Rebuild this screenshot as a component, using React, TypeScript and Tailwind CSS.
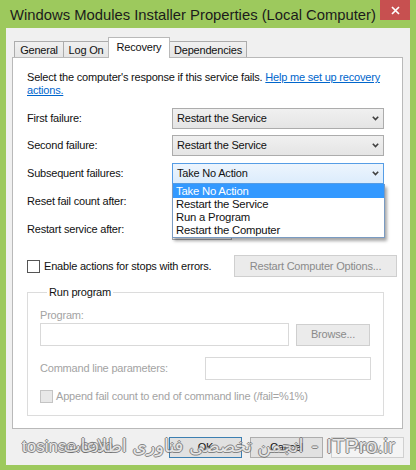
import React from "react";

const FONT = "font-['Liberation_Sans',Arial,sans-serif]";

function Chevron() {
  return (
    <svg width="7" height="5" viewBox="0 0 7 5" className="shrink-0">
      <polyline points="0.8,0.8 3.5,3.6 6.2,0.8" fill="none" stroke="#404040" strokeWidth="1.6" />
    </svg>
  );
}

function Combo({ text, focused }: { text: string; focused?: boolean }) {
  return (
    <div
      className={`w-[212px] h-[21px] flex items-center justify-between pl-[4px] pr-[4px] border ${
        focused
          ? "border-[#569de5] bg-linear-to-b from-[#edf5fd] to-[#dcecfc]"
          : "border-[#acacac] bg-linear-to-b from-[#f0f0f0] to-[#e5e5e5]"
      }`}
    >
      <span className="text-[#111]">{text}</span>
      <Chevron />
    </div>
  );
}

function Label({ children }: { children: React.ReactNode }) {
  return <div className="w-[145px] shrink-0 text-[#111]">{children}</div>;
}

function Tab({ label, w, selected }: { label: string; w: string; selected?: boolean }) {
  return selected ? (
    <div
      className={`${w} h-[21px] -ml-px relative z-10 bg-white border border-b-0 border-[#b9b9b9] flex justify-center pt-[3px] text-[#111]`}
    >
      {label}
    </div>
  ) : (
    <div
      className={`${w} h-[17px] mt-[4px] -ml-px bg-linear-to-b from-[#f0f0f0] to-[#e5e5e5] border border-b-0 border-[#acacac] flex justify-center pt-[2px] text-[#111]`}
    >
      {label}
    </div>
  );
}

export default function App() {
  return (
    <div
      className={`${FONT} relative w-[416px] h-[470px] bg-[#9dc95d] flex flex-col overflow-hidden text-[11px] tracking-[-0.2px] leading-[13px]`}
    >
      {/* Title bar */}
      <div className="h-[28px] flex items-start shrink-0">
        <div className="pl-[10px] pt-[6px] text-[14.8px] leading-[18px] tracking-normal text-[#1b1b1b]">
          Windows Modules Installer Properties (Local Computer)
        </div>
        <div className="ml-auto mr-[6px] w-[30px] h-[20px] bg-[#c75050] flex items-center justify-center">
          <svg width="9" height="9" viewBox="0 0 9 9">
            <path d="M1 1 L8 8 M8 1 L1 8" stroke="white" strokeWidth="1.7" />
          </svg>
        </div>
      </div>

      {/* Dialog body */}
      <div className="mx-[6px] h-[437px] bg-[#f0f0f0] flex flex-col">
        {/* Tabs */}
        <div className="flex items-start pt-[9px] pl-[9px] h-[30px]">
          <Tab label="General" w="w-[50px]" />
          <Tab label="Log On" w="w-[46px]" />
          <Tab label="Recovery" w="w-[62px]" selected />
          <Tab label="Dependencies" w="w-[78px]" />
        </div>

        {/* Panel */}
        <div className="-mt-px ml-[6px] w-[391px] h-[372px] bg-white border border-[#b9b9b9] pt-[13px] pl-[14px]">
          <p className="text-[#111]">
            Select the computer's response if this service fails.{" "}
            <span className="text-[#0066cc] underline">
              Help me set up recovery
              <br />
              actions.
            </span>
          </p>

          <div className="mt-[11px] flex items-center h-[21px]">
            <Label>First failure:</Label>
            <Combo text="Restart the Service" />
          </div>
          <div className="mt-[6px] flex items-center h-[21px]">
            <Label>Second failure:</Label>
            <Combo text="Restart the Service" />
          </div>
          <div className="mt-[7px] flex items-center h-[21px]">
            <Label>Subsequent failures:</Label>
            <div className="relative">
              <Combo text="Take No Action" focused />
              <div className="absolute left-0 top-full z-20 w-[213px] bg-white border border-t-0 border-[#7a9bc2] shadow-[2px_3px_3px_rgba(0,0,0,0.35)]">
                <div className="h-[14px] leading-[14px] bg-[#3399ff] text-white pl-[3px] text-[11.3px]">
                  Take No Action
                </div>
                <div className="h-[13px] leading-[13px] text-[#111] pl-[3px] text-[11.3px]">Restart the Service</div>
                <div className="h-[13px] leading-[13px] text-[#111] pl-[3px] text-[11.3px]">Run a Program</div>
                <div className="h-[13px] leading-[13px] text-[#111] pl-[3px] text-[11.3px]">Restart the Computer</div>
              </div>
            </div>
          </div>
          <div className="mt-[7px] flex items-center h-[21px]">
            <Label>Reset fail count after:</Label>
            <div className="w-[60px] h-[21px] border border-[#abadb3] bg-white" />
            <span className="ml-[6px] text-[#111]">days</span>
          </div>
          <div className="mt-[7px] flex items-center h-[21px]">
            <Label>Restart service after:</Label>
            <div className="w-[60px] h-[21px] border border-[#abadb3] bg-white" />
            <span className="ml-[6px] text-[#111]">minutes</span>
          </div>

          {/* Checkbox + button */}
          <div className="mt-[15px] flex items-center h-[22px]">
            <div className="w-[13px] h-[13px] border border-[#555] bg-white shrink-0" />
            <span className="ml-[4px] text-[#111]">Enable actions for stops with errors.</span>
            <div className="ml-auto mr-[5px] w-[163px] h-[22px] bg-[#ebebeb] border border-[#cfcfcf] flex items-center justify-center text-[#8a8a8a]">
              Restart Computer Options...
            </div>
          </div>

          {/* Run program group */}
          <fieldset className="mt-[9px] w-[357px] border border-[#dcdcdc] pl-[12px] pb-[12px]">
            <legend className="ml-[7px] px-[2px] text-[#111] leading-[13px]">Run program</legend>
            <div className="mt-[10px] text-[#a3a3a3]">Program:</div>
            <div className="mt-[1px] flex items-center">
              <div className="w-[249px] h-[23px] border border-[#d9d9d9] bg-white" />
              <div className="ml-[7px] w-[74px] h-[22px] bg-[#ebebeb] border border-[#cfcfcf] flex items-center justify-center text-[#8a8a8a]">
                Browse...
              </div>
            </div>
            <div className="mt-[11px] flex items-center">
              <div className="w-[165px] text-[#a3a3a3]">Command line parameters:</div>
              <div className="w-[166px] h-[23px] border border-[#d9d9d9] bg-white" />
            </div>
            <div className="mt-[10px] flex items-center">
              <div className="w-[13px] h-[13px] border border-[#c4c4c4] bg-[#e8e8e8] shrink-0" />
              <span className="ml-[3px] text-[#a3a3a3]">Append fail count to end of command line (/fail=%1%)</span>
            </div>
          </fieldset>
        </div>

        {/* Bottom buttons */}
        <div className="mt-[8px] flex justify-end gap-[8px] pr-[6px]">
          <div className="w-[73px] h-[21px] bg-[#e1e1e1] border border-[#3c7fb1] flex items-center justify-center text-[#111]">
            OK
          </div>
          <div className="w-[73px] h-[21px] bg-[#e1e1e1] border border-[#adadad] flex items-center justify-center text-[#111]">
            Cancel
          </div>
          <div className="w-[73px] h-[21px] bg-[#f4f4f4] border border-[#d0d0d0] flex items-center justify-center text-[#a0a0a0]">
            Apply
          </div>
        </div>
      </div>

      {/* Watermark overlay */}
      <div className="absolute left-[22px] top-[436px] text-[17px] leading-[22px] tracking-normal text-[#e6e6e6] [text-shadow:-1px_0_0_#6b6b6b,1px_0_0_#6b6b6b,0_-1px_0_#6b6b6b,0_1px_0_#6b6b6b] opacity-80">
        tosinso.com
      </div>
      <div className="absolute right-[21px] top-[434px] flex items-center whitespace-nowrap tracking-normal text-[#e6e6e6] [text-shadow:-1px_0_0_#6b6b6b,1px_0_0_#6b6b6b,0_-1px_0_#6b6b6b,0_1px_0_#6b6b6b] opacity-80">
        <span dir="rtl" className="font-['DejaVu_Sans',sans-serif] text-[18px] leading-[24px]">
          انجمن تخصصی فناوری اطلاعات
        </span>
        <span className="ml-[8px] text-[20px] leading-[24px]">-</span>
        <span className="ml-[8px] text-[21px] leading-[24px]">ITPro.ir</span>
      </div>
    </div>
  );
}
